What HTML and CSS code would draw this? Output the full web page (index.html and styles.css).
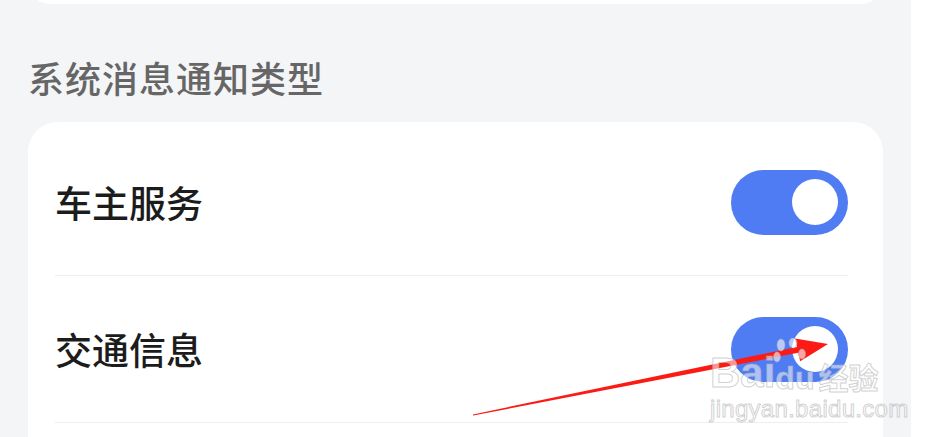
FILE: index.html
```
<!DOCTYPE html>
<html lang="zh-CN">
<head>
  <meta charset="UTF-8">
  <title>系统消息通知类型</title>
  <link rel="stylesheet" href="styles.css">
</head>
<body>
  <div class="page">
    <div class="top-card"></div>

    <h3 class="section-title">系统消息通知类型</h3>

    <div class="card">
      <div class="row">
        <span class="row-label">车主服务</span>
        <span class="switch on"><span class="knob"></span></span>
      </div>
      <div class="row">
        <span class="row-label">交通信息</span>
        <span class="switch on"><span class="knob"></span></span>
      </div>
    </div>
  </div>

  <!-- annotation arrow drawn on the screenshot -->
  <svg class="arrow" width="927" height="437" viewBox="0 0 927 437">
    <polygon fill="#fb1b14" points="473.1,415.6 798.2,352.8 800.2,361.2 828,344 795,338.6 797,347 472.9,414.4"/>
  </svg>

  <div class="watermark">
    <div class="wm-logo">
      <span>Bai</span>
      <svg class="paw" width="34" height="40" viewBox="0 0 34 40">
        <ellipse cx="8" cy="7" rx="4" ry="6" />
        <ellipse cx="20" cy="5" rx="4" ry="5" />
        <ellipse cx="4" cy="19" rx="3.5" ry="5" />
        <ellipse cx="29" cy="16" rx="3.5" ry="5" />
      </svg>
      <span class="wm-du">du</span>
      <span class="wm-cn">经验</span>
    </div>
    <div class="wm-url">jingyan.baidu.com</div>
  </div>
</body>
</html>
```

FILE: styles.css
```
* {
  box-sizing: border-box;
}

body {
  margin: 0;
  background: #ffffff;
  font-family: "Noto Sans CJK SC", "Noto Sans", sans-serif;
  width: 927px;
  height: 437px;
  overflow: hidden;
  position: relative;
}

.page {
  width: 911px;
  height: 437px;
  background: #f4f5f7;
  padding: 0 28px;
  overflow: hidden;
}

.top-card {
  height: 44px;
  margin-top: -40px;
  background: #fff;
  border-radius: 30px;
}

.section-title {
  margin: 55px 0 0 0;
  font-size: 36px;
  line-height: 36px;
  font-weight: 500;
  color: #666;
  letter-spacing: 1px;
}

.card {
  margin-top: 27px;
  background: #fff;
  border-radius: 30px;
  padding-top: 7px;
  height: 400px;
}

.row {
  height: 147px;
  margin: 0 35px 0 27px;
  border-bottom: 1px solid #eeeeee;
  display: flex;
  align-items: center;
  justify-content: space-between;
}

.row-label {
  font-size: 37px;
  font-weight: 500;
  color: #1c1c1c;
}

.switch {
  width: 117px;
  height: 65px;
  border-radius: 33px;
  background: #ccc;
  display: flex;
  align-items: center;
  padding: 0 10px;
}

.switch.on {
  background: #4f7cf2;
  justify-content: flex-end;
}

.knob {
  width: 46px;
  height: 46px;
  border-radius: 50%;
  background: #fff;
}

.arrow {
  position: absolute;
  left: 0;
  top: 0;
}

.watermark {
  position: absolute;
  left: 710px;
  top: 350px;
  color: rgba(255, 255, 255, 0.55);
  font-family: "Liberation Sans", sans-serif;
  -webkit-text-stroke: 1px rgba(170, 170, 170, 0.55);
}

.wm-logo {
  display: flex;
  align-items: flex-end;
  height: 44px;
  font-size: 42px;
  font-weight: bold;
  line-height: 42px;
}

.paw {
  fill: rgba(255, 255, 255, 0.6);
  stroke: rgba(170, 170, 170, 0.55);
  margin: 0 -32px 16px -2px;
}

.wm-du {
  font-size: 32px;
  line-height: 32px;
  margin-right: 4px;
}

.wm-cn {
  font-family: "Noto Sans CJK SC", sans-serif;
  font-size: 30px;
  line-height: 36px;
}

.wm-url {
  font-size: 24px;
  line-height: 26px;
  margin-top: 2px;
  letter-spacing: 0.3px;
}
```
